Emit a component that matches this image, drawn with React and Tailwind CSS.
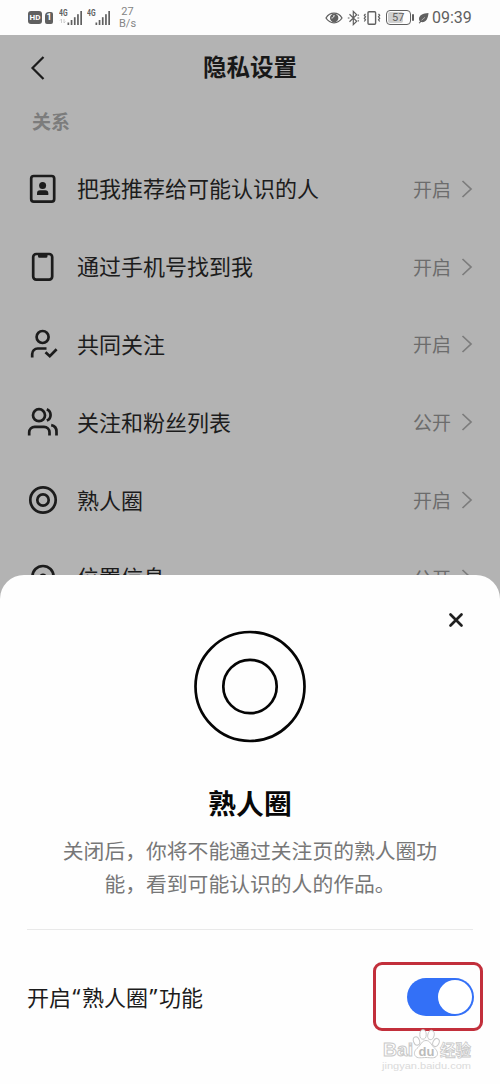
const rows = [
  { id: "recommend", label: "把我推荐给可能认识的人", value: "开启", Icon: ContactIcon },
  { id: "phone", label: "通过手机号找到我", value: "开启", Icon: PhoneIcon },
  { id: "mutual", label: "共同关注", value: "开启", Icon: UserCheckIcon },
  { id: "lists", label: "关注和粉丝列表", value: "公开", Icon: UsersIcon },
  { id: "circle", label: "熟人圈", value: "开启", Icon: CircleIcon },
  { id: "location", label: "位置信息", value: "公开", Icon: LocationIcon },
];

function RowSvg({ children }) {
  return (
    <svg
      className="size-8 shrink-0"
      viewBox="0 0 32 32"
      fill="none"
      stroke="#1c1c1c"
      strokeWidth="2.7"
    >
      {children}
    </svg>
  );
}

function ContactIcon() {
  return (
    <RowSvg>
      <rect x="4.2" y="3" width="23" height="25.6" rx="2.6" />
      <circle cx="15.6" cy="12.5" r="3.5" fill="#1c1c1c" stroke="none" />
      <path
        d="M10 22v-1.7a3 3 0 0 1 3-3h5.3a3 3 0 0 1 3 3v1.7z"
        fill="#1c1c1c"
        stroke="none"
      />
    </RowSvg>
  );
}

function PhoneIcon() {
  return (
    <RowSvg>
      <rect x="6.2" y="3" width="19" height="25.6" rx="3" />
      <path
        d="M11 3h9.5v2.3a1.5 1.5 0 0 1-1.5 1.5h-6.5a1.5 1.5 0 0 1-1.5-1.5z"
        fill="#1c1c1c"
        stroke="none"
      />
    </RowSvg>
  );
}

function UserCheckIcon() {
  return (
    <RowSvg>
      <circle cx="15.6" cy="9" r="6" />
      <path d="M5.2 29.5V26a5.500 5.500 0 0 1 5.500-5.500h8.800" />
      <path d="M18.500 24.200l4.300 4 6.800-6.900" />
    </RowSvg>
  );
}

function UsersIcon() {
  return (
    <RowSvg>
      <circle cx="12" cy="9.2" r="6" />
      <path d="M2.200 29.600v-3.300a5.500 5.500 0 0 1 5.500-5.500h9.300a5.500 5.500 0 0 1 5.500 5.500v3.300" />
      <path d="M19.800 3.200a6.200 6.200 0 0 1 0 11.400" />
      <path d="M24.200 19.200c3.500.6 5.300 3 5.300 6.500v3.900" />
    </RowSvg>
  );
}

function CircleIcon() {
  return (
    <RowSvg>
      <circle cx="16" cy="16" r="12.700" />
      <circle cx="16" cy="16" r="5.700" />
    </RowSvg>
  );
}

function LocationIcon() {
  return (
    <RowSvg>
      <path d="M16 4C10 4 5.500 8.500 5.500 14.200c0 6.500 6 12 10.500 15.500 4.500-3.500 10.500-9 10.500-15.500C26.500 8.500 22 4 16 4z" />
      <circle cx="16" cy="14.700" r="3.300" fill="#1c1c1c" stroke="none" />
    </RowSvg>
  );
}

function Signal({ dim }) {
  return (
    <svg className="h-5 w-6" viewBox="0 0 24 20" fill="#606060">
      <text x="0" y="8" fontSize="8.500" fontWeight="700" textLength="8.500" lengthAdjust="spacingAndGlyphs">
        4G
      </text>
      {dim && (
        <path d="M2.500 15v-4l-1.500 1.500M5 11v4l1.500-1.500" fill="none" stroke="#c8c8c8" strokeWidth=".9" />
      )}
      <rect x="8.500" y="14.500" width="1.700" height="2.500" />
      <rect x="11.700" y="12" width="1.700" height="5" />
      <rect x="14.900" y="9.200" width="1.700" height="7.800" />
      <rect x="18.100" y="6.200" width="1.700" height="10.800" />
      <rect x="21.300" y="3" width="1.700" height="14" />
    </svg>
  );
}

function StatusBar() {
  return (
    <div className="flex h-[35px] shrink-0 items-center justify-between bg-[#fdfdfd] px-[28px] font-['Roboto',sans-serif] text-[#606060]">
      <div className="flex items-center">
        <span className="flex h-[13px] w-[14px] items-center justify-center rounded-[3px] bg-[#606060] text-[8px] font-bold text-white">
          HD
        </span>
        <span className="ml-[3px] flex h-[12px] w-[8px] items-center justify-center rounded-[2px] rounded-tl-[4px] bg-[#606060] text-[9px] font-bold text-white">
          1
        </span>
        <span className="ml-[6px] flex gap-[4px]">
          <Signal dim />
          <Signal />
        </span>
        <span className="ml-[8px] flex flex-col items-center text-[11px] leading-[12px] text-[#858585]">
          <span>27</span>
          <span>B/s</span>
        </span>
      </div>
      <div className="flex items-center">
        <svg className="h-[14px] w-[18px]" viewBox="0 0 18 14" fill="none" stroke="#606060" strokeWidth="1.300">
          <path d="M1 7c4-6.400 12-6.400 16 0-4 6.400-12 6.400-16 0z" />
          <circle cx="9.200" cy="7" r="4.200" fill="#606060" stroke="none" />
          <path d="M9 4a2.500 2.500 0 0 1-2.500 3" stroke="#fdfdfd" strokeWidth="1" />
        </svg>
        <svg className="ml-[4px] h-[16px] w-[13px]" viewBox="0 0 13 16" fill="none" stroke="#606060" strokeWidth="1.200">
          <path d="M2.500 4.200l7.200 7-3.400 3.400V1.400l3.400 3.400-7.200 7" />
          <path d="M.8 8h1.700M10.400 8h1.800M10.800 5.600l1-.8M10.800 10.400l1 .8" />
        </svg>
        <svg className="ml-[3px] h-[16px] w-[18px]" viewBox="0 0 18 16" fill="none" stroke="#606060" strokeWidth="1.400">
          <rect x="5" y="1.700" width="7.600" height="12.600" rx="1" />
          <path
            d="M2.500 3.800L1.300 5.300l1.200 1.500-1.200 1.500 1.200 1.500-1.200 1.700M15.500 3.800l1.200 1.500-1.200 1.500 1.200 1.500-1.200 1.500 1.200 1.700"
            strokeWidth="1.200"
          />
        </svg>
        <span className="ml-[5px] flex h-[15px] w-[25px] items-center rounded-[4px] border border-[#606060] p-[1px]">
          <span className="flex h-full w-[15px] items-center rounded-[2px] bg-[#d0d0d0] pl-[4px] text-[11px] leading-none">
            57
          </span>
        </span>
        <span className="ml-[1px] h-[7px] w-[2px] rounded-sm bg-[#606060]" />
        <svg className="ml-[4px] h-[12px] w-[11px]" viewBox="0 0 11 12" fill="#606060">
          <path d="M10.500 1C5 1.300.8 3.200 1 7.300c.1 1 .5 1.700 1 2.200L.7 11l.8.400 1.500-1.300c4.800.8 7-3 7.500-9.100z" />
          <path d="M3.500 8.300l3.500-3" stroke="#fdfdfd" strokeWidth=".5" />
        </svg>
        <span className="ml-[3px] w-[40px] text-[16px] leading-none whitespace-nowrap">09:39</span>
      </div>
    </div>
  );
}

function SettingRow({ label, value, Icon }) {
  return (
    <li className="flex h-[77.8px] items-center px-[27px]">
      <Icon />
      <span className="ml-[18px] flex-1 pb-[3px] text-[22px] leading-none text-[#1c1c1c]">{label}</span>
      <span className="pb-[1px] text-[19px] leading-none text-[#6c6c6c]">{value}</span>
      <svg className="ml-[10px] h-5 w-[12px]" viewBox="0 0 12 20" fill="none" stroke="#7c7c7c" strokeWidth="1.700">
        <path d="M1.500 2l8.500 8-8.500 8" />
      </svg>
    </li>
  );
}

function Watermark() {
  return (
    <div className="absolute right-[27px] bottom-[11px] w-[92px]">
      <svg className="h-[45px] w-[92px]" viewBox="0 0 92 45" fill="#fff" stroke="#c9c9c9" strokeWidth="1">
        <text x="2" y="28" fontFamily="Liberation Sans" fontWeight="700" fontSize="19" textLength="30" lengthAdjust="spacingAndGlyphs">
          Bai
        </text>
        <ellipse cx="35.500" cy="13" rx="3" ry="4.300" transform="rotate(-20 35.500 13)" />
        <ellipse cx="42" cy="6.500" rx="3.200" ry="4.700" />
        <ellipse cx="50" cy="7" rx="3.200" ry="4.700" transform="rotate(12 50 7)" />
        <ellipse cx="55" cy="14.500" rx="3" ry="4.200" transform="rotate(25 55 14.500)" />
        <path d="M45 12.500c-4 0-5 4-8 7-3 2.500-4.500 5-3 8 2 3.500 7 2 11 2s9 1.500 11-2c1.500-3-.5-5.500-3-8-3-3-4-7-8-7z" />
        <text x="37.500" y="27.500" fill="#bbb" stroke="none" fontFamily="Liberation Sans" fontWeight="700" fontSize="13">
          du
        </text>
        <text x="59" y="27.500" fontFamily="Noto Sans CJK SC" fontWeight="700" fontSize="15.500" strokeWidth=".8">
          经验
        </text>
        <text x="1" y="41" fill="#dadada" stroke="none" fontFamily="Liberation Sans" fontSize="9.500" textLength="89" lengthAdjust="spacingAndGlyphs">
          jingyan.baidu.com
        </text>
      </svg>
    </div>
  );
}

function CircleSheet() {
  return (
    <section className="absolute inset-x-0 bottom-0 flex h-[509px] flex-col rounded-t-[24px] bg-[#fefefe] px-[27px]">
      <button className="mt-[37px] mr-[9px] self-end" aria-label="关闭">
        <svg className="size-[16px]" viewBox="0 0 16 16" fill="none" stroke="#202020" strokeWidth="2.700" strokeLinecap="round">
          <path d="M2.500 2.500l11 11M13.500 2.500l-11 11" />
        </svg>
      </button>
      <svg className="mt-[1px] size-[114px] self-center" viewBox="0 0 114 114" fill="none" stroke="#050505" strokeWidth="2.700">
        <circle cx="57" cy="57.500" r="54.500" />
        <circle cx="57" cy="57.500" r="26.700" />
      </svg>
      <h2 className="mt-[43px] text-center text-[27.800px] leading-[32px] font-bold text-[#080808]">熟人圈</h2>
      <p className="mt-[16px] text-center text-[20.800px] leading-[33px] text-[#777]">
        关闭后，你将不能通过关注页的熟人圈功
        <br />
        能，看到可能认识的人的作品。
      </p>
      <hr className="mt-[29px] border-[#e9e9e9]" />
      <div className="mt-[32px] -mr-[10px] flex h-[69px] items-center justify-between">
        <span className="flex pb-[2px] text-[22px] leading-none text-[#1c1c1c]">
          开启
          <span className="w-[11px] text-center font-['Noto_Sans',sans-serif]">“</span>
          熟人圈
          <span className="w-[11px] text-center font-['Noto_Sans',sans-serif]">”</span>
          功能
        </span>
        <span className="flex h-[69px] w-[110px] items-center justify-end rounded-[9px] border-[3px] border-[#c22f3b] pr-[6px]">
          <span className="flex h-[38px] w-[67px] items-center justify-end rounded-full bg-[#3370f7] pr-[2px]">
            <span className="size-[34px] rounded-full bg-white" />
          </span>
        </span>
      </div>
      <Watermark />
    </section>
  );
}

export default function App() {
  return (
    <div className="relative flex h-[1084px] w-[500px] flex-col overflow-hidden bg-[#b3b3b3] font-['Noto_Sans_CJK_SC',sans-serif]">
      <StatusBar />
      <header className="grid h-[66px] shrink-0 grid-cols-3 items-center px-[30px]">
        <svg className="h-[24px] w-[15px]" viewBox="0 0 15 24" fill="none" stroke="#1c1c1c" strokeWidth="2.200">
          <path d="M13.500 1L2.500 12l11 11" />
        </svg>
        <h1 className="pb-[2px] text-center text-[23.500px] leading-none font-bold text-[#181818]">隐私设置</h1>
      </header>
      <h2 className="h-[49px] shrink-0 pl-[32px] text-[19px] leading-[39px] font-bold text-[#7c7c7c]">关系</h2>
      <ul className="shrink-0">
        {rows.map((row) => (
          <SettingRow key={row.id} {...row} />
        ))}
      </ul>
      <CircleSheet />
    </div>
  );
}
